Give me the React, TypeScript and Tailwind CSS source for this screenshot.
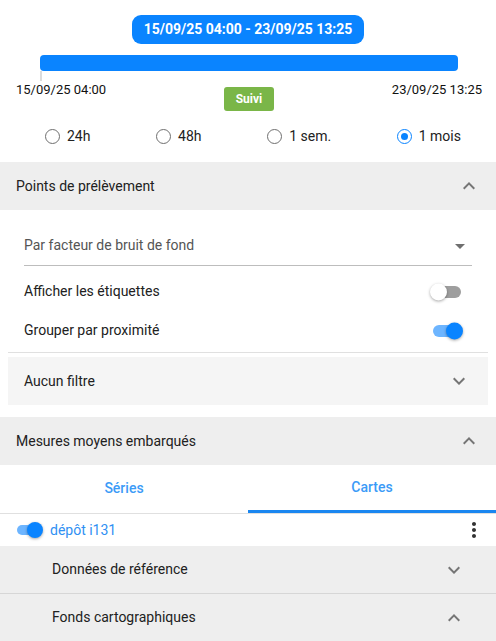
import React from "react";

function ExpandMore({ className = "" }: { className?: string }) {
  return (
    <svg viewBox="0 0 24 24" className={`h-6 w-6 ${className}`} fill="currentColor">
      <path d="M16.59 8.59 12 13.17 7.41 8.59 6 10l6 6 6-6z" />
    </svg>
  );
}

function ExpandLess({ className = "" }: { className?: string }) {
  return (
    <svg viewBox="0 0 24 24" className={`h-6 w-6 ${className}`} fill="currentColor">
      <path d="m12 8-6 6 1.41 1.41L12 10.83l4.59 4.58L18 14z" />
    </svg>
  );
}

function Radio({ label, checked }: { label: string; checked?: boolean }) {
  return (
    <div className="flex items-center gap-[7px]">
      <span
        className={`flex h-[15px] w-[15px] items-center justify-center rounded-full border-[1.5px] ${
          checked ? "border-[#0a84ff]" : "border-[#6f6f6f]"
        }`}
      >
        {checked && <span className="h-[7px] w-[7px] rounded-full bg-[#0a84ff]" />}
      </span>
      <span className="text-[14px] text-[#222]">{label}</span>
    </div>
  );
}

function Toggle({ on, small }: { on?: boolean; small?: boolean }) {
  const track = small ? "w-[25px] h-[10px]" : "w-[29px] h-[12px]";
  const knob = small ? "h-[16px] w-[16px]" : "h-[17px] w-[17px]";
  return (
    <div className={`relative flex items-center ${small ? "w-[27px]" : "w-[32px]"} h-[18px]`}>
      <div
        className={`${track} mx-auto rounded-full ${on ? "bg-[#6db5ff]" : "bg-[#9e9e9e]"}`}
      />
      <div
        className={`absolute top-1/2 -translate-y-1/2 ${knob} rounded-full shadow-[0_1px_3px_rgba(0,0,0,0.35)] ${
          on ? "right-0 bg-[#0a84ff]" : "left-0 bg-white"
        }`}
      />
    </div>
  );
}

export default function App() {
  return (
    <div className="w-[496px] bg-white text-[#212121]" style={{ fontFamily: "Roboto, 'Liberation Sans', sans-serif" }}>
      {/* period selector */}
      <div className="pt-[15px]">
        <div className="flex justify-center">
          <div className="flex h-[29px] items-center rounded-[9px] bg-[#0a84ff] px-[12px] text-[14px] font-bold text-white">
            15/09/25 04:00 - 23/09/25 13:25
          </div>
        </div>
        <div className="mt-[11px] ml-[40px] mr-[38px]">
          <div className="h-[16px] rounded-[4px] bg-[#0a84ff]" />
          <div className="h-[10px] w-[2px] bg-[#dcdcdc]" />
        </div>
        <div className="flex items-start justify-between pl-[16px] pr-[14px]">
          <span className="mt-[-1px] text-[13px] text-[#111]">15/09/25 04:00</span>
          <button className="mt-[6px] flex h-[24px] w-[50px] items-center justify-center rounded-[3px] bg-[#7ab648] text-[12px] font-bold text-white">
            Suivi
          </button>
          <span className="mt-[-1px] text-[13px] text-[#111]">23/09/25 13:25</span>
        </div>
        <div className="flex h-[51px] items-center justify-between pl-[45px] pr-[35px]">
          <Radio label="24h" />
          <Radio label="48h" />
          <Radio label="1 sem." />
          <Radio label="1 mois" checked />
        </div>
      </div>

      {/* Points de prélèvement */}
      <div className="flex h-[48px] items-center justify-between bg-[#eeeeee] pl-[16px] pr-[15px]">
        <span className="text-[14px]">Points de prélèvement</span>
        <ExpandLess className="text-[#757575]" />
      </div>
      <div className="px-[8px] pb-[12px]">
        <div className="px-[16px] pt-[23px]">
          <div className="flex h-[33px] items-center justify-between border-b border-[#bdbdbd]">
            <span className="mt-[-7px] text-[14px] text-[#555]">Par facteur de bruit de fond</span>
            <svg viewBox="0 0 24 24" className="mt-[-7px] h-6 w-6 text-[#6f6f6f]" fill="currentColor">
              <path d="M7 10l5 5 5-5z" />
            </svg>
          </div>
          <div className="flex h-[38px] items-center justify-between pt-[13px]">
            <span className="text-[14px]">Afficher les étiquettes</span>
            <div className="mr-[10px]">
              <Toggle />
            </div>
          </div>
          <div className="flex h-[39px] items-center justify-between pt-[14px]">
            <span className="text-[14px]">Grouper par proximité</span>
            <div className="mr-[9px]">
              <Toggle on />
            </div>
          </div>
        </div>
        <div className="mt-[9px] border-t border-[#e0e0e0]" />
        <div className="mt-[4px] flex h-[48px] items-center justify-between bg-[#f5f5f5] pl-[16px] pr-[17px]">
          <span className="text-[14px]">Aucun filtre</span>
          <ExpandMore className="text-[#757575]" />
        </div>
      </div>

      {/* Mesures moyens embarqués */}
      <div className="flex h-[48px] items-center justify-between bg-[#eeeeee] pl-[16px] pr-[15px]">
        <span className="text-[14px]">Mesures moyens embarqués</span>
        <ExpandLess className="text-[#757575]" />
      </div>
      <div className="grid grid-cols-2 border-b border-[#e0e0e0]">
        <div className="flex h-[48px] items-center justify-center pb-[2px] text-[14px] font-medium text-[#3b9bf7]">
          Séries
        </div>
        <div className="flex h-[48px] items-center justify-center border-b-[3px] border-[#1a86f0] text-[14px] font-medium text-[#3b9bf7]">
          Cartes
        </div>
      </div>
      <div className="flex h-[32px] items-center justify-between pl-[16px] pr-[10px]">
        <div className="flex items-center gap-[7px]">
          <Toggle on small />
          <span className="text-[14px] text-[#2f90f3]">dépôt i131</span>
        </div>
        <svg viewBox="0 0 24 24" className="h-6 w-6 text-[#333]" fill="currentColor">
          <path d="M12 8c1.1 0 2-.9 2-2s-.9-2-2-2-2 .9-2 2 .9 2 2 2zm0 2c-1.1 0-2 .9-2 2s.9 2 2 2 2-.9 2-2-.9-2-2-2zm0 6c-1.1 0-2 .9-2 2s.9 2 2 2 2-.9 2-2-.9-2-2-2z" />
        </svg>
      </div>
      <div className="flex h-[48px] items-center justify-between border-b border-[#d6d6d6] bg-[#eeeeee] pl-[52px] pr-[30px]">
        <span className="text-[14px]">Données de référence</span>
        <ExpandMore className="text-[#757575]" />
      </div>
      <div className="flex h-[47px] items-center justify-between bg-[#eeeeee] pl-[52px] pr-[30px]">
        <span className="text-[14px]">Fonds cartographiques</span>
        <ExpandLess className="text-[#757575]" />
      </div>
    </div>
  );
}
